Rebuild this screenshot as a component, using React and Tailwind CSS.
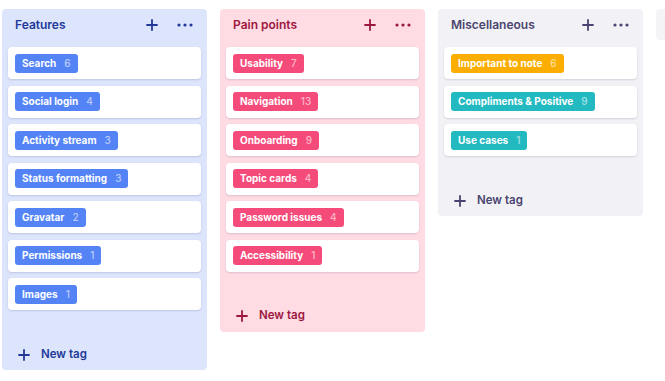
import React from 'react'

const columns = [
  {
    title: 'Features',
    bg: 'bg-[#dce5fc]',
    text: 'text-[#22399a]',
    tags: [
      ['Search', 6, 'bg-[#5483f6]'],
      ['Social login', 4, 'bg-[#5483f6]'],
      ['Activity stream', 3, 'bg-[#5483f6]'],
      ['Status formatting', 3, 'bg-[#5483f6]'],
      ['Gravatar', 2, 'bg-[#5483f6]'],
      ['Permissions', 1, 'bg-[#5483f6]'],
      ['Images', 1, 'bg-[#5483f6]']
    ]
  },
  {
    title: 'Pain points',
    bg: 'bg-[#ffdbe3]',
    text: 'text-[#9c1740]',
    tags: [
      ['Usability', 7, 'bg-[#f54b7a]'],
      ['Navigation', 13, 'bg-[#f54b7a]'],
      ['Onboarding', 9, 'bg-[#f54b7a]'],
      ['Topic cards', 4, 'bg-[#f54b7a]'],
      ['Password issues', 4, 'bg-[#f54b7a]'],
      ['Accessibility', 1, 'bg-[#f54b7a]']
    ]
  },
  {
    title: 'Miscellaneous',
    bg: 'bg-[#f2f2f6]',
    text: 'text-[#4a4470]',
    tags: [
      ['Important to note', 6, 'bg-[#fbae00]'],
      ['Compliments & Positive', 9, 'bg-[#22b9c0]'],
      ['Use cases', 1, 'bg-[#22b9c0]']
    ]
  }
]

const Plus = ({ className = '' }) => (
  <svg viewBox="0 0 12 12" className={className} fill="none" stroke="currentColor" strokeWidth="1.8" strokeLinecap="round">
    <path d="M6 1v10M1 6h10" />
  </svg>
)

const Dots = ({ className = '' }) => (
  <svg viewBox="0 0 16 4" className={className} fill="currentColor">
    <circle cx="2" cy="2" r="1.6" />
    <circle cx="8" cy="2" r="1.6" />
    <circle cx="14" cy="2" r="1.6" />
  </svg>
)

const Column = ({ title, bg, text, tags }) => (
  <div className={`w-[205px] shrink-0 rounded-[4px] ${bg} ${text}`}>
    <div className="flex h-[30px] items-center pl-[13px] pr-[14px] pt-[2px]">
      <span className="flex-1 text-[12px] font-semibold leading-[16px]">{title}</span>
      <Plus className="h-[12px] w-[12px]" />
      <Dots className="ml-[19px] h-[4px] w-[16px]" />
    </div>
    <div className="mt-[8px] flex flex-col gap-[6.5px] px-[6px]">
      {tags.map(([name, count, color]) => (
        <div key={name} className="flex h-[32px] items-center rounded-[4px] bg-white px-[7px] shadow-[0_1px_2px_rgba(60,60,100,0.18)]">
          <span className={`flex h-[19px] items-center gap-[8px] rounded-[3px] px-[7px] text-[10px] font-bold text-white ${color}`}>
            {name}
            <span className="font-medium text-white/60">{count}</span>
          </span>
        </div>
      ))}
    </div>
    <div className="mt-[29px] flex h-[31px] items-center pl-[16px]">
      <Plus className="h-[12px] w-[12px]" />
      <span className="ml-[11px] text-[11.5px] font-semibold">New tag</span>
    </div>
  </div>
)

export default function App() {
  return (
    <div className="flex h-[381px] w-[665px] items-start gap-[13px] overflow-hidden bg-white pl-[2px] pt-[9px]" style={{ fontFamily: 'Inter, "Noto Sans", sans-serif' }}>
      {columns.map((c) => (
        <Column key={c.title} {...c} />
      ))}
      <div className="h-[31px] w-[60px] shrink-0 rounded-[4px] bg-[#f4f4f7]" />
    </div>
  )
}
